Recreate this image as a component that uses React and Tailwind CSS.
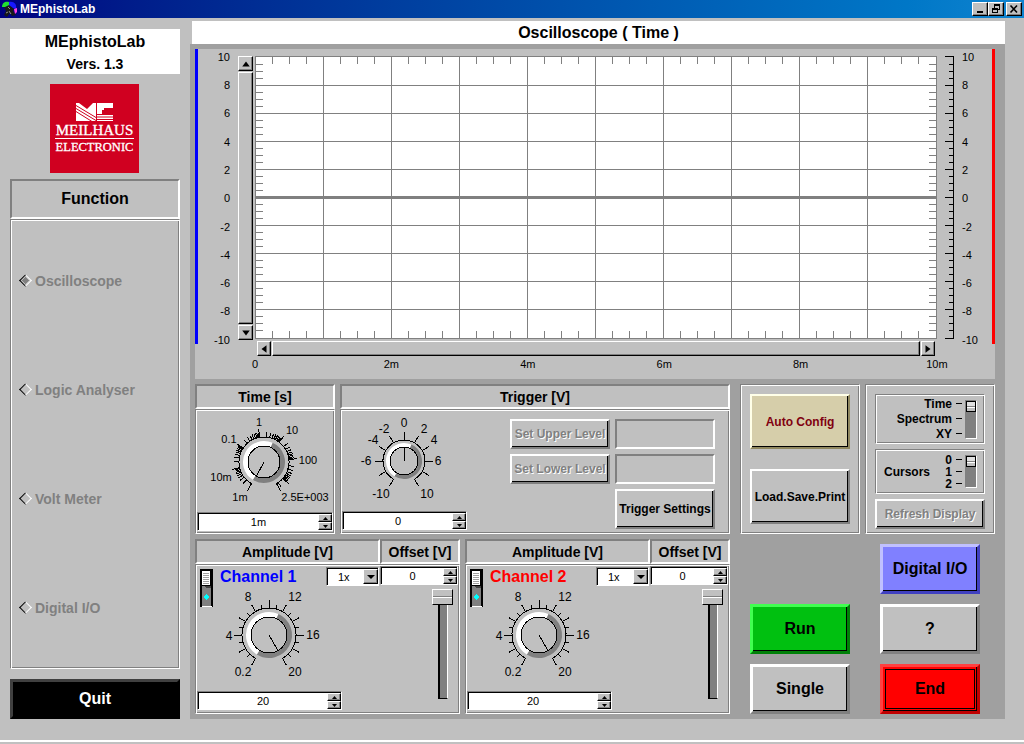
import clsx from 'clsx'

const functions = ['Oscilloscope', 'Logic Analyser', 'Volt Meter', 'Digital I/O']
const volts = [10, 8, 6, 4, 2, 0, -2, -4, -6, -8, -10]
const times = ['0', '2m', '4m', '6m', '8m', '10m']

// y of each horizontal grid line inside the 283px high plot
const gridRows = [29, 57, 85, 113, 141, 169, 197, 225, 253]

const sunken = 'border-2 border-t-[#808080] border-l-[#808080] border-r-white border-b-white'
const etched =
  'border border-t-[#808080] border-l-[#808080] border-r-white border-b-white shadow-[inset_1px_1px_0_#fff,inset_-1px_-1px_0_#808080]'
const smallBevel =
  'bg-[#c0c0c0] border border-t-white border-l-white border-r-black border-b-black shadow-[inset_-1px_-1px_0_#808080]'

const buttonColors = {
  gray: 'bg-[#c0c0c0] border-t-white border-l-white border-r-[#808080] border-b-[#808080] text-black',
  sand: 'bg-[#d6ceaa] border-t-[#ffffe8] border-l-[#ffffe8] border-r-[#908860] border-b-[#908860] text-[#800010]',
  blue: 'bg-[#8080ff] border-t-[#c0c0ff] border-l-[#c0c0ff] border-r-[#4040c0] border-b-[#4040c0] text-black',
  green: 'bg-[#00c010] border-t-[#40ff50] border-l-[#40ff50] border-r-[#008008] border-b-[#008008] text-black',
  red: 'bg-[#ff0000] border-t-[#ff4040] border-l-[#ff4040] border-r-[#c00000] border-b-[#c00000] text-black',
}

function Button({ color = 'gray', thick, disabled, className, children }) {
  return (
    <button
      type="button"
      disabled={disabled}
      className={clsx(
        'flex items-center justify-center whitespace-nowrap font-bold shadow-[inset_-1px_-1px_0_#000]',
        thick ? 'border-3 text-base' : 'border-2 text-xs',
        buttonColors[color],
        disabled && 'text-[#808080]! [text-shadow:1px_1px_0_#fff]',
        className
      )}
    >
      {children}
    </button>
  )
}

function Header({ className, children }) {
  return (
    <h2 className={clsx('h-[25px] flex items-center justify-center text-sm font-bold', sunken, className)}>
      {children}
    </h2>
  )
}

function Spinner({ label, value, className }) {
  return (
    <div
      className={clsx(
        'flex h-[19px] border border-t-[#808080] border-l-[#808080] border-r-white border-b-white',
        className
      )}
    >
      <input
        type="text"
        aria-label={label}
        defaultValue={value}
        className="min-w-0 flex-1 bg-white border-t border-l border-black text-center text-[11px] outline-none"
      />
      <div className="w-[14px] flex flex-col border-t border-black">
        <button type="button" aria-label={`${label} up`} className={clsx('flex-1 flex items-center justify-center', smallBevel)}>
          <svg width="5" height="3" viewBox="0 0 5 3"><path d="M2.5 0 5 3H0z" /></svg>
        </button>
        <button type="button" aria-label={`${label} down`} className={clsx('flex-1 flex items-center justify-center', smallBevel)}>
          <svg width="5" height="3" viewBox="0 0 5 3"><path d="M2.5 3 5 0H0z" /></svg>
        </button>
      </div>
    </div>
  )
}

// angles are degrees clockwise from twelve o'clock
function polar(r, deg) {
  const a = (deg * Math.PI) / 180
  return [r * Math.sin(a), -r * Math.cos(a)]
}

function arc(r, from, to) {
  const [x1, y1] = polar(r, from)
  const [x2, y2] = polar(r, to)
  return `M${x1} ${y1}A${r} ${r} 0 ${to - from > 180 ? 1 : 0} 1 ${x2} ${y2}`
}

function Knob({ name, width, height, cx, cy, dial, scale, bezel, angle, ticks, labels, fontSize }) {
  const mid = dial + bezel / 2
  const [px, py] = polar(dial, angle)
  return (
    <div className="relative">
      <svg width={width} height={height} viewBox={`${-cx} ${-cy} ${width} ${height}`} className="block overflow-visible">
        <g fill="none" stroke="#000" shapeRendering="crispEdges">
          <path d={arc(scale, -150, 150)} />
          {ticks.map(([deg, len]) => {
            const [x1, y1] = polar(scale, deg)
            const [x2, y2] = polar(scale + len, deg)
            return <line key={deg} x1={x1} y1={y1} x2={x2} y2={y2} />
          })}
        </g>
        <circle r={dial + bezel + 2} fill="#c0c0c0" />
        <path d={arc(mid, 24, 212)} fill="none" stroke="#808080" strokeWidth={bezel} />
        <path d={arc(mid, -148, 24)} fill="none" stroke="#fff" strokeWidth={bezel} />
        <circle r={dial} fill="#c0c0c0" stroke="#000" shapeRendering="crispEdges" />
        <line x2={px} y2={py} stroke="#000" shapeRendering="crispEdges" />
        <g fontSize={fontSize} textAnchor="middle">
          {labels.map(([text, x, y]) => (
            <text key={text} x={x} y={y + 4}>{text}</text>
          ))}
        </g>
      </svg>
      <input type="range" aria-label={name} className="absolute inset-0 size-full opacity-0" />
    </div>
  )
}

// log scale from 1e-3 to 2.5e3
const timeTicks = []
for (let d = -3; d <= 3; d++) {
  for (let m = 1; m < 10; m++) {
    const v = Math.log10(m) + d
    if (v > Math.log10(2500)) break
    timeTicks.push([-150 + ((v + 3) / 6.4) * 300, m === 1 ? 8 : 5])
  }
}
timeTicks.push([150, 8])
const timeLabels = [
  ['1m', -24, 35], ['10m', -43, 15], ['0.1', -35, -23], ['1', -5, -40],
  ['10', 28, -32], ['100', 44, -2], ['2.5E+003', 41, 35],
]

const triggerTicks = [-150, -120, -90, -60, -30, 0, 30, 60, 90, 120, 150].map((a) => [a, 8])
const triggerLabels = [
  ['0', 0, -38], ['-2', -20, -32], ['2', 20, -32], ['-4', -31, -21], ['4', 30, -21],
  ['-6', -38, 0], ['6', 34, 0], ['-10', -23, 33], ['10', 23, 33],
]

const ampTicks = []
for (let i = 0; i <= 20; i++) ampTicks.push([-150 + i * 15, i % 2 ? 4 : 8])
const ampLabels = [
  ['8', -21, -38], ['12', 26, -38], ['4', -40, 1], ['16', 44, 0], ['0.2', -26, 37], ['20', 26, 37],
]

function ScrollArrow({ label, d, className }) {
  return (
    <button type="button" aria-label={label} className={clsx('flex items-center justify-center', smallBevel, className)}>
      <svg width="10" height="10" viewBox="0 0 8 8"><path d={d} /></svg>
    </button>
  )
}

function Plot() {
  const minorX = []
  for (let x = 17; x < 680; x += 17) if (x % 68) minorX.push(x)
  const minorY = []
  gridRows.forEach((y) => minorY.push(y + 7, y + 14, y + 21))
  minorY.push(8, 15, 22)
  return (
    <svg viewBox="0 0 682 283" preserveAspectRatio="none" className="block w-full h-[283px] bg-white" shapeRendering="crispEdges">
      <g fill="none" stroke="#808080">
        <rect x="0.5" y="0.5" width="681" height="282" />
        {[68, 136, 204, 272, 340, 408, 476, 544, 612].map((x) => (
          <path key={x} d={`M${x + 0.5} 0V283`} />
        ))}
        {gridRows.map((y) => (
          <path key={y} d={`M0 ${y + 0.5}H682`} strokeWidth={y === 141 ? 3 : 1} />
        ))}
        {minorX.map((x) => (
          <path key={x} d={`M${x + 0.5} 0V8M${x + 0.5} 275V283`} />
        ))}
        {minorY.map((y) => (
          <path key={y} d={`M0 ${y + 0.5}H8M674 ${y + 0.5}H682`} />
        ))}
      </g>
    </svg>
  )
}

function RightAxis() {
  const minor = [8, 15, 22]
  gridRows.forEach((y) => minor.push(y + 7, y + 14, y + 21))
  return (
    <svg width="9" height="283" viewBox="0 0 9 283" className="block" shapeRendering="crispEdges">
      <g fill="none" stroke="#000">
        <path d="M0 .5H8.5V282.5H0" />
        {gridRows.map((y) => <path key={y} d={`M0 ${y + 0.5}H8`} />)}
        {minor.map((y) => <path key={y} d={`M4 ${y + 0.5}H8`} />)}
      </g>
    </svg>
  )
}

function VoltLabels({ className }) {
  return (
    <div className={clsx('mt-2 h-[283px] flex flex-col justify-between text-[11px]', className)}>
      {volts.map((v) => (
        <span key={v} className="h-0 flex items-center">{v}</span>
      ))}
    </div>
  )
}

function Chart() {
  return (
    <section className="h-[330px] flex bg-[#c0c0c0]">
      <div className="w-[3px] h-[295px] bg-[#0000ff]" />
      <VoltLabels className="w-8 items-end" />
      <div className="ml-2 mt-[7px] w-[15px] h-[284px] flex flex-col">
        <ScrollArrow label="Scroll up" d="M4 2 7 6H1z" className="h-[15px] w-full" />
        <div className={clsx('my-px flex-1', smallBevel)} />
        <ScrollArrow label="Scroll down" d="M4 6 7 2H1z" className="h-[15px] w-full" />
      </div>
      <div className="ml-0.5 mt-[7px] flex-1 min-w-0">
        <Plot />
        <div className="mt-0.5 mx-0.5 h-[15px] flex">
          <ScrollArrow label="Scroll left" d="M2 4 6 1V7z" className="w-[14px] h-full" />
          <div className={clsx('mx-px flex-1', smallBevel)} />
          <ScrollArrow label="Scroll right" d="M6 4 2 1V7z" className="w-[14px] h-full" />
        </div>
        <div className="mt-2 flex justify-between text-[11px]">
          {times.map((t) => (
            <span key={t} className="w-0 h-0 flex items-center justify-center">{t}</span>
          ))}
        </div>
      </div>
      <div className="ml-2 mt-[7px]">
        <RightAxis />
      </div>
      <VoltLabels className="ml-2 w-[30px] items-start" />
      <div className="w-[3px] h-[295px] bg-[#ff0000]" />
    </section>
  )
}

function PowerSwitch({ label }) {
  return (
    <div className="relative mt-0.5 ml-[3px] w-[13px] h-[38px]">
      <svg width="13" height="38" viewBox="0 0 13 38" className="block" shapeRendering="crispEdges">
        <path d="M0 0H13V38H0z" />
        <path d="M2 2H10V16H2z" fill="#fff" />
        <path d="M3 4.500H9M3 6.500H9M3 8.500H9M3 10.500H9M3 12.500H9M3 14.500H9" stroke="#a0a0a0" />
        <path d="M2 17H11V37H2z" fill="#808080" />
        <path d="M4 17H11V19H6z" fill="#404040" />
        <path d="M6.500 25 9.500 28 6.500 31 3.500 28z" fill="#0ff" />
        <path d="M2 37.500H12" stroke="#fff" />
      </svg>
      <input type="checkbox" defaultChecked aria-label={label} className="absolute inset-0 size-full opacity-0" />
    </div>
  )
}

function Channel({ name, color }) {
  return (
    <section className="flex-1 flex flex-col bg-[#c0c0c0]">
      <div className="flex">
        <Header className="flex-1">Amplitude [V]</Header>
        <Header className="w-20">Offset [V]</Header>
      </div>
      <div className={clsx('h-[150px] flex p-px', etched)}>
        <div className="flex-1 flex flex-col">
          <div className="mt-px flex">
            <PowerSwitch label={`${name} on`} />
            <div className="ml-[7px] flex-1">
              <div className="flex justify-between">
                <h3 className={clsx('text-base leading-[19px] font-bold', color)}>{name}</h3>
                <div className="relative w-[53px] h-[19px] mr-px border border-t-[#808080] border-l-[#808080] border-r-white border-b-white">
                  <select
                    aria-label={`${name} probe`}
                    className="block size-full appearance-none bg-white border-t border-l border-black pl-2.5 text-[11px] leading-4 outline-none"
                  >
                    <option>1x</option>
                    <option>10x</option>
                  </select>
                  <span className={clsx('pointer-events-none absolute right-0 inset-y-px w-[15px] flex items-center justify-center', smallBevel)}>
                    <svg width="8" height="4" viewBox="0 0 8 4"><path d="M0 0H8L4 4z" /></svg>
                  </span>
                </div>
              </div>
              <Knob
                name={`${name} amplitude`}
                width={100} height={96} cx={49} cy={49}
                dial={18} bezel={5} scale={27} angle={150}
                ticks={ampTicks} labels={ampLabels} fontSize={12}
              />
            </div>
          </div>
          <Spinner label={`${name} amplitude value`} value="20" className="mt-auto mb-0.5 w-[145px]" />
        </div>
        <div className="w-[78px] flex flex-col">
          <Spinner label={`${name} offset value`} value="0" />
          <div className="relative mt-1 mr-[5px] self-end w-[21px] h-[110px] flex justify-center">
            <div className="w-2.5 bg-[#808080] border-l-2 border-b border-l-black border-b-black border-r border-r-white" />
            <input
              type="range"
              aria-label={`${name} offset`}
              min="0"
              max="10"
              defaultValue="10"
              className="absolute inset-0 size-full appearance-none bg-transparent [writing-mode:vertical-lr] [direction:rtl] [&::-webkit-slider-thumb]:appearance-none [&::-webkit-slider-thumb]:w-[21px] [&::-webkit-slider-thumb]:h-4 [&::-webkit-slider-thumb]:bg-[linear-gradient(#c0c0c0_6px,#808080_6px,#808080_7px,#fff_7px,#fff_8px,#c0c0c0_8px)] [&::-webkit-slider-thumb]:border [&::-webkit-slider-thumb]:border-t-white [&::-webkit-slider-thumb]:border-l-white [&::-webkit-slider-thumb]:border-r-black [&::-webkit-slider-thumb]:border-b-black"
            />
          </div>
        </div>
      </div>
    </section>
  )
}

function SlideSwitch({ label, options, rowClass, className }) {
  return (
    <>
      <div className="ml-auto text-xs font-bold">
        {options.map((o) => (
          <div key={o} className={clsx('flex items-center justify-end', rowClass)}>
            {o}
            <span className="ml-1 w-1.5 h-px bg-black" />
          </div>
        ))}
      </div>
      <input
        type="range"
        aria-label={label}
        min="0"
        max="2"
        defaultValue="2"
        className={clsx(
          'ml-[3px] mr-[7px] w-3 appearance-none bg-[#808080] border border-t-[#808080] border-l-[#808080] border-r-white border-b-white [writing-mode:vertical-lr] [direction:rtl] [&::-webkit-slider-thumb]:appearance-none [&::-webkit-slider-thumb]:w-2.5 [&::-webkit-slider-thumb]:h-[11px] [&::-webkit-slider-thumb]:bg-[linear-gradient(#e0e0e0_4px,#808080_4px,#808080_5px,#fff_5px,#fff_6px,#c0c0c0_6px)] [&::-webkit-slider-thumb]:border [&::-webkit-slider-thumb]:border-black',
          className
        )}
      />
    </>
  )
}

function Logo() {
  return (
    <svg width="89" height="89" viewBox="0 0 89 89" className="block" role="img" aria-label="Meilhaus Electronic">
      <path fill="#d00020" d="M0 0H89V89H0z" />
      <path fill="#fff" d="M26 19H29L37 25 43 19H46V37H26z" />
      <path fill="#fff" d="M47 19H63V24H54V26H52V30H63V37H47z" />
      <g stroke="#d00020" fill="none">
        <path d="M26 21.500 46 33.500M26 24.500 46 36.500M26 27.500 42 37.500" />
        <path d="M47 30.500H63M47 33H63M47 35.500H63" />
      </g>
      <g fill="#fff" stroke="#fff" strokeWidth=".3" fontFamily="Liberation Serif, serif" textAnchor="middle">
        <text x="44.500" y="51" fontSize="15">MEILHAUS</text>
        <text x="44.500" y="67" fontSize="12.500">ELECTRONIC</text>
      </g>
      <path d="M5 54.500H84" stroke="#fff" />
    </svg>
  )
}

function TitleBar() {
  const control = clsx('w-4 h-[14px] flex items-center justify-center', smallBevel)
  return (
    <header className="h-[18px] flex items-center pl-0.5 pr-0.5 bg-linear-to-r from-[#000080] to-[#1084d0]">
      <svg width="16" height="16" viewBox="0 0 16 16">
        <path d="M2 6 8 4 12 8 11 10 14 14 10 15 8 12 5 16 2 14 4 10z" fill="#181818" />
        <path d="M0 6C0 1 4 0 7 1L7 4 3 6z" fill="#20e030" />
        <path d="M7 1C12 0 15 3 14 8L11 7 7 4z" fill="#1818ff" />
        <path d="M12 8 15 7V11L13 13z" fill="#ff40e0" />
        <path d="M6 6 8 8M7 10 9 13M4 12 6 11" stroke="#909090" />
      </svg>
      <h1 className="ml-0.5 text-xs font-bold text-white">MEphistoLab</h1>
      <div className="ml-auto flex">
        <button type="button" aria-label="Minimize" className={control}>
          <svg width="10" height="10" viewBox="0 0 10 10"><path d="M2 7H8V9H2z" /></svg>
        </button>
        <button type="button" aria-label="Restore" className={control}>
          <svg width="10" height="10" viewBox="0 0 10 10" fill="none" stroke="#000" shapeRendering="crispEdges">
            <path d="M3.500 4V.5H8.500V5.500H7M3 1.500H9M1.500 4.500H6.500V8.500H1.500zM1 5.500H7" />
          </svg>
        </button>
        <button type="button" aria-label="Close" className={clsx(control, 'ml-0.5')}>
          <svg width="10" height="10" viewBox="0 0 10 10"><path d="M1.500 1.500 8 8.500M8 1.500 1.500 8.500" stroke="#000" strokeWidth="1.600" /></svg>
        </button>
      </div>
    </header>
  )
}

function Sidebar() {
  return (
    <aside className="w-[170px] pt-[11px] flex flex-col">
      <div className="h-[45px] bg-white text-center font-bold">
        <div className="text-base leading-[25px]">MEphistoLab</div>
        <div className="text-sm leading-5">Vers. 1.3</div>
      </div>
      <div className="mt-2.5 ml-10 h-[95px]">
        <Logo />
      </div>
      <h2 className={clsx('h-10 flex items-center justify-center text-base font-bold', sunken)}>Function</h2>
      <div className={clsx('h-[450px] flex flex-col pt-1.5 pb-1.5 pl-2.5', etched)}>
        {functions.map((f, i) => (
          <label key={f} className="flex-1 flex items-center gap-[5px] text-sm font-bold text-[#808080]">
            <input
              type="radio"
              name="function"
              disabled
              defaultChecked={i === 0}
              className="appearance-none size-[9px] rotate-45 border border-l-black border-b-black border-t-white border-r-white checked:bg-[#808080] checked:[background-clip:content-box] checked:p-px"
            />
            {f}
          </label>
        ))}
      </div>
      <button
        type="button"
        className="mt-2.5 h-10 bg-black border-3 border-t-[#404040] border-l-[#404040] border-r-black border-b-black text-base font-bold text-white"
      >
        Quit
      </button>
    </aside>
  )
}

export default function App() {
  return (
    <div className="min-h-screen flex flex-col bg-[#c0c0c0] text-black font-['Liberation_Sans',Arial,sans-serif]">
      <TitleBar />
      <div className="flex gap-2.5 pl-2.5 pr-[19px]">
        <Sidebar />
        <main className="flex-1 min-w-0 pt-[3px]">
          <h2 className="ml-0.5 h-[23px] flex items-center justify-center bg-white text-base font-bold">
            Oscilloscope ( Time )
          </h2>
          <div className="flex flex-col gap-[5px] bg-[#a0a0a0] py-[5px] pl-[5px] pr-2.5">
            <Chart />
            <div className="flex gap-2.5">
              <div className="flex-1 flex flex-col gap-[5px]">
                <div className="flex gap-[5px]">
                  <section className="w-[140px] bg-[#c0c0c0]">
                    <Header>Time [s]</Header>
                    <div className={clsx('h-[125px] flex flex-col justify-between px-px pt-px pb-0.5', etched)}>
                      <Knob
                        name="Time"
                        width={136} height={94} cx={67} cy={51}
                        dial={16} bezel={5} scale={25} angle={-152}
                        ticks={timeTicks} labels={timeLabels} fontSize={11}
                      />
                      <Spinner label="Time value" value="1m" />
                    </div>
                  </section>
                  <section className="flex-1 bg-[#c0c0c0]">
                    <Header>Trigger [V]</Header>
                    <div className={clsx('h-[125px] flex justify-between p-px', etched)}>
                      <div className="w-[125px] flex flex-col justify-between pb-0.5">
                        <Knob
                          name="Trigger"
                          width={125} height={94} cx={62} cy={50}
                          dial={14} bezel={4} scale={21} angle={0}
                          ticks={triggerTicks} labels={triggerLabels} fontSize={12}
                        />
                        <Spinner label="Trigger value" value="0" />
                      </div>
                      <div className="mt-2 mr-[13px] grid grid-cols-[100px_100px] grid-rows-[30px_30px_40px] gap-[5px]">
                        <Button disabled>Set Upper Level</Button>
                        <input type="text" readOnly aria-label="Upper level" className={clsx('min-w-0', sunken)} />
                        <Button disabled>Set Lower Level</Button>
                        <input type="text" readOnly aria-label="Lower level" className={clsx('min-w-0', sunken)} />
                        <Button className="col-start-2">Trigger Settings</Button>
                      </div>
                    </div>
                  </section>
                </div>
                <div className="flex gap-[5px]">
                  <Channel name="Channel 1" color="text-[#0000ff]" />
                  <Channel name="Channel 2" color="text-[#ff0000]" />
                </div>
              </div>

              <div className="w-[255px]">
                <div className="flex gap-[5px]">
                  <section className={clsx('w-[120px] h-[150px] bg-[#c0c0c0] px-[9px] py-[9px] flex flex-col justify-between', etched)}>
                    <Button color="sand" className="h-[55px]">Auto Config</Button>
                    <Button className="h-[55px]">Load.Save.Print</Button>
                  </section>
                  <section className={clsx('flex-1 h-[150px] bg-[#c0c0c0] px-[9px] pt-[9px] flex flex-col gap-[5px]', etched)}>
                    <div className={clsx('h-[50px] flex items-start pt-px', etched)}>
                      <SlideSwitch label="Display mode" options={['Time', 'Spectrum', 'XY']} rowClass="h-[15px]" className="mt-1 h-[39px]" />
                    </div>
                    <div className={clsx('h-[45px] flex items-center', etched)}>
                      <span className="ml-2 text-xs font-bold">Cursors</span>
                      <SlideSwitch label="Cursors" options={['0', '1', '2']} rowClass="h-3" className="h-[33px]" />
                    </div>
                    <Button disabled className="h-[30px]">Refresh Display</Button>
                  </section>
                </div>
                <div className="mt-2.5 grid grid-cols-[120px_130px] gap-x-[5px] gap-y-2.5 justify-items-center">
                  <Button thick color="blue" className="col-start-2 w-[100px] h-[50px]">Digital I/O</Button>
                  <Button thick color="green" className="w-[100px] h-[50px]">Run</Button>
                  <Button thick className="w-[100px] h-[50px]">?</Button>
                  <Button thick className="w-[100px] h-[50px]">Single</Button>
                  <Button thick color="red" className="w-[100px] h-[50px] p-0.5">
                    <span className="size-full flex items-center justify-center border border-black">End</span>
                  </Button>
                </div>
              </div>
            </div>
          </div>
        </main>
      </div>
      <div className="mt-[21px] border-t-2 border-white" />
    </div>
  )
}
